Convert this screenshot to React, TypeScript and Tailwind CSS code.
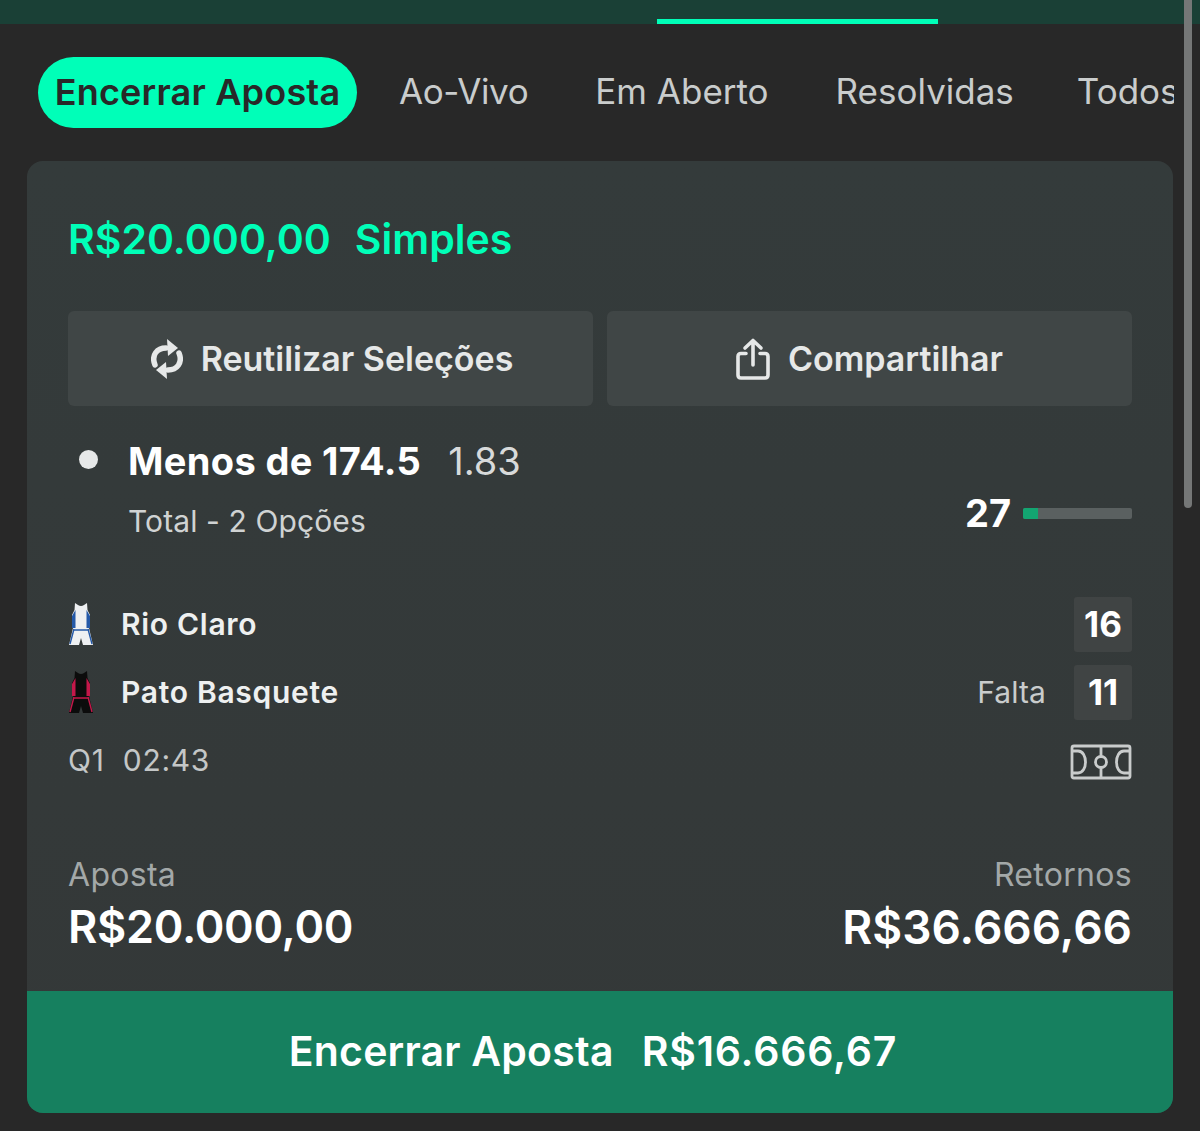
import React from 'react';

const Jersey = ({ body, trim }: { body: string; trim: string }) => (
  <svg width="26" height="44" viewBox="0 0 26 44" className="shrink-0">
    <path d="M7 1 L10 3 Q13 5 16 3 L19 1 L19.5 8 L22 13 L22 26 L4 26 L4 13 L6.5 8 Z" fill={body} />
    <path d="M4 14 L7.5 8 L7.5 26 L4 26 Z M22 14 L18.5 8 L18.5 26 L22 26 Z" fill={trim} />
    <path d="M5 26 L21 26 L25 43 L15 43 L13 36 L11 43 L1 43 Z" fill={body} />
    <path d="M6 27 L2 42 M20 27 L24 42 M5 28 L21 28" stroke={trim} strokeWidth="1.4" fill="none" />
  </svg>
);

const ReuseIcon = () => (
  <svg width="32" height="40" viewBox="0 0 32 40" fill="none" className="ml-[3px] shrink-0">
    <path d="M4 26 C0 16 6 9 15 9" stroke="#e6e8e8" strokeWidth="5.5" strokeLinecap="round" />
    <path d="M16 0 L27 9 L17 17 Z" fill="#e6e8e8" />
    <path d="M28 14 C32 24 26 31 17 31" stroke="#e6e8e8" strokeWidth="5.5" strokeLinecap="round" />
    <path d="M16 40 L5 31 L15 23 Z" fill="#e6e8e8" />
  </svg>
);

const ShareIcon = () => (
  <svg width="34" height="42" viewBox="0 0 34 42" fill="none" stroke="#e6e8e8" strokeWidth="3.6" strokeLinecap="round" strokeLinejoin="round" className="shrink-0">
    <path d="M17 27 V2.5 M9 10 L17 2.5 L25 10" />
    <path d="M10 15.5 H5 Q2 15.5 2 18.5 V37 Q2 40 5 40 H29 Q32 40 32 37 V18.5 Q32 15.5 29 15.5 H24" />
  </svg>
);

const CourtIcon = () => (
  <svg width="62" height="36" viewBox="0 0 62 36" fill="none" stroke="#c9cccc" strokeWidth="2.8" className="mt-[2px] shrink-0">
    <rect x="2" y="2" width="58" height="32" rx="2" />
    <path d="M31 2 V34" />
    <circle cx="31" cy="18" r="5.5" fill="#343a3a" />
    <path d="M2 7 H8 C18 7 18 29 8 29 H2 M60 7 H54 C44 7 44 29 54 29 H60" />
  </svg>
);

const ScoreRow = ({ team, score, note, body, trim }: { team: string; score: string; note?: string; body: string; trim: string }) => (
  <div className="flex h-[56px] items-center">
    <Jersey body={body} trim={trim} />
    <span className="ml-[27px] text-[30px] font-semibold tracking-[0.7px] text-[#eef0f0]">{team}</span>
    {note && <span className="ml-auto mr-[28px] text-[30px] tracking-[0.1px] text-[#c9cccc]">{note}</span>}
    <span className={`${note ? '' : 'ml-auto'} flex h-[55px] w-[58px] items-center justify-center rounded-[3px] bg-[#404444] text-[35px] font-bold text-white`}>
      {score}
    </span>
  </div>
);

export default function App() {
  const tabs = [
    { label: 'Ao-Vivo', className: 'ml-[42px] tracking-[-0.4px]' },
    { label: 'Em Aberto', className: 'ml-[67px]' },
    { label: 'Resolvidas', className: 'ml-[67px]' },
    { label: 'Todos', className: 'ml-[63px]' },
  ];

  return (
    <div className="relative h-[1131px] w-[1200px] overflow-hidden bg-[#282828] font-['Inter',sans-serif]">
      <div className="flex h-[24px] items-end bg-[#1a4036] pl-[657px]">
        <div className="h-[5px] w-[281px] bg-[#00ffb8]" />
      </div>

      <div className="mt-[33px] ml-[38px] flex h-[71px] w-[1136px] items-center overflow-hidden">
        <div className="flex h-[71px] w-[319px] shrink-0 items-center justify-center rounded-full bg-[#00ffb8] pb-[2px] text-[36px] font-semibold tracking-[0.2px] whitespace-nowrap text-[#282828]">
          Encerrar Aposta
        </div>
        {tabs.map((tab) => (
          <span
            key={tab.label}
            className={`shrink-0 pb-[2px] text-[35px] whitespace-nowrap text-[#c9cccc] ${tab.className}`}
          >
            {tab.label}
          </span>
        ))}
      </div>

      <div className="mt-[33px] ml-[27px] w-[1146px] overflow-hidden rounded-[16px] bg-gradient-to-b from-[#343b3b] to-[#343838]">
        <div className="px-[41px]">
          <div className="flex h-[150px] items-center pt-[7px] text-[41px] font-semibold text-[#00ffb8]">
            <span>R$20.000,00</span>
            <span className="ml-[24px]">Simples</span>
          </div>

          <div className="flex gap-[14px]">
            <div className="flex h-[95px] flex-1 items-center justify-center gap-[18px] rounded-[6px] bg-[#404646] text-[34px] font-semibold text-[#e6e8e8]">
              <ReuseIcon />
              <span>Reutilizar Seleções</span>
            </div>
            <div className="flex h-[95px] flex-1 items-center justify-center gap-[18px] rounded-[6px] bg-[#404646] text-[34px] font-semibold text-[#e6e8e8]">
              <ShareIcon />
              <span>Compartilhar</span>
            </div>
          </div>

          <div className="mt-[27px] flex h-[120px] items-start">
            <div className="mt-[17px] ml-[11px] h-[19px] w-[19px] shrink-0 rounded-full bg-[#e6e8e8]" />
            <div className="ml-[30px]">
              <div className="flex items-baseline whitespace-nowrap">
                <span className="text-[38px] font-bold tracking-[0.35px] text-white">Menos de 174.5</span>
                <span className="ml-[27px] text-[38px] text-[#d8dada]">1.83</span>
              </div>
              <div className="mt-[9px] text-[30px] tracking-[0.1px] whitespace-nowrap text-[#d0d3d3]">Total - 2 Opções</div>
            </div>
            <div className="mt-[52px] ml-auto flex items-center">
              <span className="text-[38px] font-bold text-white">27</span>
              <div className="ml-[12px] h-[11px] w-[109px] overflow-hidden rounded-[2px] bg-[#5a6060]">
                <div className="h-full w-[15px] bg-[#13a571]" />
              </div>
            </div>
          </div>

          <div className="mt-[43px] flex flex-col gap-[12px]">
            <ScoreRow team="Rio Claro" score="16" body="#eef0f2" trim="#2459a8" />
            <ScoreRow team="Pato Basquete" score="11" note="Falta" body="#0c0c0c" trim="#c4184a" />
          </div>

          <div className="mt-[18px] flex items-center justify-between">
            <span className="text-[30px] tracking-[0.7px] text-[#c4c7c7]">Q1&nbsp;&nbsp;02:43</span>
            <CourtIcon />
          </div>

          <div className="mt-[73px] flex justify-between">
            <div>
              <div className="text-[32px] leading-[38px] tracking-[0.3px] text-[#a3a8a8]">Aposta</div>
              <div className="mt-[5px] text-[45px] leading-[56px] font-semibold tracking-[-0.3px] text-white">R$20.000,00</div>
            </div>
            <div className="text-right">
              <div className="text-[32px] leading-[38px] tracking-[0.3px] text-[#a3a8a8]">Retornos</div>
              <div className="mt-[5px] text-[46px] leading-[56px] font-semibold text-white">R$36.666,66</div>
            </div>
          </div>
        </div>

        <div className="mt-[36px] flex h-[122px] items-center justify-center gap-[28px] bg-[#16805f] pr-[14px] text-[41px] font-semibold text-white">
          <span className="tracking-[0.2px]">Encerrar Aposta</span>
          <span className="tracking-[0.8px]">R$16.666,67</span>
        </div>
      </div>

      <div className="absolute top-0 left-[1184px] h-[508px] w-[8px] rounded-b-full bg-[#757777]" />
    </div>
  );
}
